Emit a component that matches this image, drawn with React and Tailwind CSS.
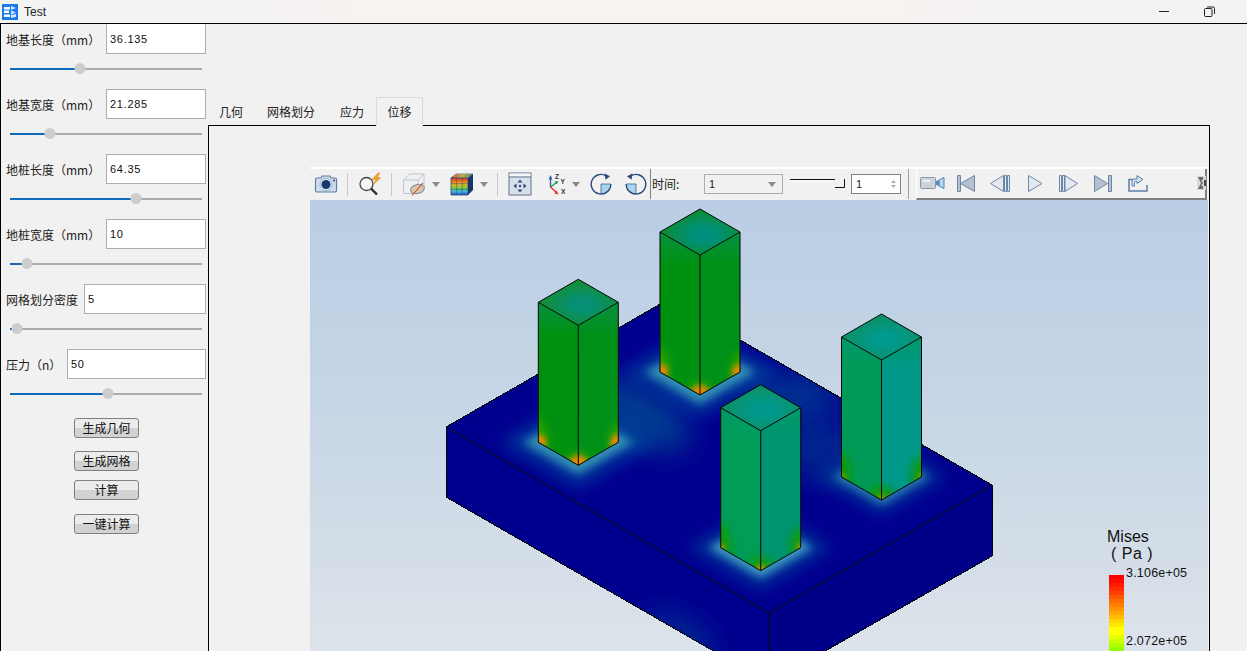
import React from "react";

const fields = [
  { label: "地基长度（mm）", value: "36.135", labelW: "w-[100px]", thumb: 70, first: true },
  { label: "地基宽度（mm）", value: "21.285", labelW: "w-[100px]", thumb: 40 },
  { label: "地桩长度（mm）", value: "64.35", labelW: "w-[100px]", thumb: 126 },
  { label: "地桩宽度（mm）", value: "10", labelW: "w-[100px]", thumb: 17 },
  { label: "网格划分密度", value: "5", labelW: "w-[78px]", thumb: 7 },
  { label: "压力（n）", value: "50", labelW: "w-[61px]", thumb: 98 },
];

function Field({ label, value, labelW, thumb, first }) {
  return (
    <div className="h-[65px] shrink-0">
      <div className="flex h-[30px] items-center pl-[5px] pr-[2px]">
        <div className={`${labelW} shrink-0 text-[12px] leading-none text-[#222] pt-[2px] whitespace-nowrap`}>{label}</div>
        <div className={`flex h-[30px] flex-1 items-center border border-[#adadad] bg-white pl-[3px] font-['Liberation_Sans',sans-serif] text-[11px] tracking-[0.7px] text-[#111] ${first ? "border-t-white" : ""}`}>
          {value}
        </div>
      </div>
      <div className="relative ml-[9px] mt-[14px] h-[2px] w-[192px] bg-[#acacac]">
        <div className="h-[2px] bg-[#0f6cbd]" style={{ width: thumb }} />
        <div className="absolute top-[-5px] h-[11px] w-[11px] -translate-x-1/2 rounded-full bg-[#cdcdcd]" style={{ left: thumb }} />
      </div>
    </div>
  );
}

function Btn({ children, className = "" }) {
  return (
    <div className={`ml-[73px] flex h-[20px] w-[65px] items-center justify-center rounded-[3px] border border-[#808080] bg-[linear-gradient(#ececec_50%,#d2d2d2_50%)] text-[12px] text-[#111] ${className}`}>
      {children}
    </div>
  );
}

function Sep({ className = "" }) {
  return <div className={`h-[23px] w-px shrink-0 bg-[#c8c8c8] ${className}`} />;
}

function Caret({ className = "" }) {
  return (
    <svg width="8" height="5" viewBox="0 0 8 5" className={`shrink-0 ${className}`}>
      <path d="M0 0h8L4 5z" fill="#8a8a8a" />
    </svg>
  );
}

function Ico({ w = 24, h = 24, className = "", children }) {
  return (
    <svg width={w} height={h} viewBox={`0 0 ${w} ${h}`} className={`shrink-0 ${className}`}>
      {children}
    </svg>
  );
}

const CameraIcon = () => (
  <Ico className="ml-[4px]">
    <path d="M1.500 7.500q0-1.500 1.500-1.500H7l1-2h8l1 2h4q1.500 0 1.500 1.500v11q0 1.500-1.500 1.500H3q-1.500 0-1.500-1.500z" fill="#cfdcec" stroke="#5f7fa6" strokeWidth="1.200" />
    <circle cx="12" cy="12.500" r="6" fill="#eaf0f7" stroke="#8aa3c2" strokeWidth="0.8" />
    <circle cx="12" cy="12.500" r="4.500" fill="#17386f" />
    <circle cx="20" cy="8.500" r="0.9" fill="#17386f" />
  </Ico>
);

const SearchBoltIcon = () => (
  <Ico className="ml-[10px]">
    <circle cx="8.500" cy="12" r="6.500" fill="#f4f6f8" stroke="#444" strokeWidth="1.300" />
    <path d="M13 16.500l6 6" stroke="#2c2c2c" strokeWidth="2.400" />
    <path d="M20 1l-6 6.500h4l-3 5.500 8-7.500h-4l3-4.500z" fill="#f0a030" stroke="#d98a20" strokeWidth="0.5" />
  </Ico>
);

const HiddenCubeIcon = () => (
  <Ico className="ml-[10px]">
    <path d="M1.500 8l6-6h14.500v13l-6 6.500H1.500z" fill="#eef0f3" stroke="#c0c6d0" />
    <path d="M1.500 8H16v13.500M16 8l6-6" fill="none" stroke="#c0c6d0" />
    <ellipse cx="15.500" cy="17" rx="7" ry="4.500" transform="rotate(-15 15.500 17)" fill="#d8c9a8" stroke="#7f8694" />
    <path d="M10 23.500L21 11" stroke="#d0452a" strokeWidth="1.100" />
  </Ico>
);

const ColorCubeIcon = () => (
  <Ico className="ml-[10px]">
    <defs>
      <linearGradient id="cc-front" x1="0" y1="0" x2="0" y2="1">
        <stop offset="0" stopColor="#e03020" />
        <stop offset="0.35" stopColor="#f0b020" />
        <stop offset="0.6" stopColor="#70d040" />
        <stop offset="0.8" stopColor="#40b0e0" />
        <stop offset="1" stopColor="#2050c0" />
      </linearGradient>
      <linearGradient id="cc-top" x1="0" y1="0" x2="1" y2="0">
        <stop offset="0" stopColor="#e05030" />
        <stop offset="0.5" stopColor="#f0d040" />
        <stop offset="1" stopColor="#50b050" />
      </linearGradient>
    </defs>
    <path d="M1 6l5-4h17l-5 4z" fill="url(#cc-top)" stroke="#2f4a78" strokeWidth="0.6" />
    <path d="M1 6h17v17H1z" fill="url(#cc-front)" stroke="#2f4a78" strokeWidth="0.8" />
    <path d="M18 6l5-4v16l-5 5z" fill="#17356c" />
    <path d="M6.700 6v17M12.300 6v17M1 11.700h17M1 17.300h17M6 4h17" stroke="#2f4a78" strokeWidth="0.5" fill="none" />
  </Ico>
);

const FitIcon = () => (
  <Ico className="ml-[10px]">
    <rect x="1" y="1" width="22" height="22" fill="#d9dfe8" stroke="#5e7190" />
    <rect x="1.500" y="1.500" width="21" height="3" fill="#f4f6f9" />
    <path d="M1 5h22" stroke="#5e7190" />
    <path d="M12 7.500l-2.500 3h5zM12 20.500l-2.500-3h5zM5.500 14l3-2.500v5zM18.500 14l-3-2.500v5z" fill="#2e4a78" />
    <circle cx="12" cy="14" r="1.200" fill="#2e4a78" />
  </Ico>
);

const AxesIcon = () => (
  <Ico w={24} h={24} className="ml-[12px]">
    <path d="M6.500 15V6" stroke="#2c62b0" strokeWidth="1.400" />
    <path d="M6.500 3L4.500 7.500h4z" fill="#2c62b0" />
    <path d="M6.500 15l6-4.500" stroke="#23a050" strokeWidth="1.400" />
    <path d="M14.500 9l-4 .5 2 3z" fill="#23a050" />
    <path d="M6.500 15l6 5.500" stroke="#e03030" strokeWidth="1.400" />
    <path d="M14.500 22.500l-4-1 2-3z" fill="#e03030" />
    <text x="11" y="6.500" fontSize="6.500" fontWeight="700" fill="#333" fontFamily="Liberation Sans">Z</text>
    <text x="16.500" y="11.500" fontSize="6.500" fontWeight="700" fill="#333" fontFamily="Liberation Sans">Y</text>
    <text x="17" y="22" fontSize="6.500" fontWeight="700" fill="#333" fontFamily="Liberation Sans">X</text>
  </Ico>
);

const RotateIcon = ({ flip, className = "" }) => (
  <Ico className={className}>
    <g transform={flip ? "matrix(-1 0 0 1 24 0)" : undefined}>
      <path d="M12 12h9.500A9.500 9.500 0 0 1 12 21.500z" fill="#a9d4f0" />
      <path d="M17 3.800A9.800 9.800 0 1 0 21.800 12" fill="none" stroke="#274a7c" strokeWidth="1.400" />
      <path d="M15.500 1.500l5.500 2.800-4.500 3.500z" fill="#274a7c" />
      <path d="M12 12v9.800M12 12h9.800" stroke="#274a7c" strokeWidth="0.7" />
    </g>
  </Ico>
);

const stroke = "#6d87ab";
const fill = "#e4e9f0";

const CamcorderIcon = () => (
  <Ico w={25} h={16} className="ml-[3px]">
    <rect x="0.500" y="2.500" width="15" height="11" rx="1" fill="#ced2d9" stroke="#8b95a5" />
    <rect x="3" y="5" width="7" height="2" fill="#eef0f3" />
    <path d="M16 6l3-1v6l-3-1z" fill="#5b88b8" />
    <path d="M19 5l5-2.500v11L19 11z" fill="#bcd3e8" stroke="#3e86c0" />
  </Ico>
);

const PlayerIcon = ({ w, className = "", d, solid }) => (
  <Ico w={w} h={17} className={className}>
    <path d={d} fill={solid ? "#b5bfcd" : fill} stroke={stroke} strokeWidth="1" />
  </Ico>
);

const ExportIcon = () => (
  <Ico w={20} h={18} className="ml-[16px]">
    <path d="M5 5.500H1v11.500h18v-6" fill="none" stroke="#5d7da6" strokeWidth="1.500" />
    <path d="M4 12V7q0-2 2-2h3V1.500L15 5.500l-6 4V7.500H7.500Q6.500 7.500 6.500 8.500V12z" fill="#d6e2ef" stroke="#5d7da6" />
  </Ico>
);

const GripIcon = () => (
  <Ico w={9} h={16} className="ml-[49px]">
    <rect x="0" y="1" width="9" height="14" fill="#d8d8d8" />
    <path d="M1 2h5v3H4L6 8l-2 3h2v3H1l3-6z" fill="#6a6a6a" />
    <path d="M7 5h2v6H7z" fill="#4a4a4a" />
  </Ico>
);

function Toolbar() {
  return (
    <div className="flex h-[33px] w-[898px] shrink-0 border-t-2 border-t-white bg-[#f1f1f1] text-[12px] text-[#222]">
      <div className="flex h-[30px] w-[599px] shrink-0 items-center border-r border-r-[#a0a0a0]">
        <CameraIcon />
        <Sep className="ml-[9px]" />
        <SearchBoltIcon />
        <Sep className="ml-[9px]" />
        <HiddenCubeIcon />
        <Caret className="ml-[6px]" />
        <ColorCubeIcon />
        <Caret className="ml-[6px]" />
        <Sep className="ml-[9px]" />
        <FitIcon />
        <AxesIcon />
        <Caret className="ml-[4px]" />
        <RotateIcon className="ml-[9px]" />
        <RotateIcon flip className="ml-[11px]" />
        <div className="ml-[2px] h-[30px] w-px shrink-0 bg-[#808080]" />
        <div className="w-[53px] shrink-0 pl-[1px] leading-none">时间:</div>
        <div className="flex h-[20px] w-[79px] shrink-0 items-center justify-between border border-[#adadad] pl-[4px] pr-[6px] font-['Liberation_Sans',sans-serif] text-[11px]">
          1
          <Caret />
        </div>
        <svg width="56" height="14" viewBox="0 0 56 14" className="ml-[7px] shrink-0">
          <path d="M0 2.500h45" stroke="#111" />
          <path d="M0 4h44" stroke="#fff" />
          <path d="M45 10.500h9.500V2" fill="none" stroke="#111" />
        </svg>
        <div className="ml-[5px] flex h-[20px] w-[50px] shrink-0 items-center justify-between border border-[#808080] bg-white pl-[4px] pr-[4px] font-['Liberation_Sans',sans-serif] text-[11px]">
          1
          <svg width="5" height="10" viewBox="0 0 5 10">
            <path d="M0 4l2.500-3L5 4zM0 6l2.500 3L5 6z" fill="#b0b0b0" />
          </svg>
        </div>
      </div>
      <div className="ml-[7px] flex h-[31px] w-[291px] shrink-0 items-center border-b-[2px] border-r-[2px] border-b-[#808080] border-r-[#808080] border-l border-l-white pb-[1px]">
        <CamcorderIcon />
        <PlayerIcon w={18} className="ml-[12px]" d="M.5.5h3v16h-3zM17.500.5v16l-14-8z" solid />
        <PlayerIcon w={20} className="ml-[15px]" d="M.5 8.500l13-8v16zM14.500.5h2v16h-2zM17.500.5h2v16h-2z" />
        <PlayerIcon w={15} className="ml-[18px]" d="M.5.5l13.500 8-13.500 8z" />
        <PlayerIcon w={19} className="ml-[16px]" d="M.5.5h2v16h-2zM3.500.5h2v16h-2zM6 .5l12.500 8-12.500 8z" />
        <PlayerIcon w={18} className="ml-[16px]" d="M.5.5l13 8-13 8zM14.500.5h3v16h-3z" solid />
        <ExportIcon />
        <GripIcon />
      </div>
    </div>
  );
}

const pillars = [
  { id: "p2", cx: 700, y: 209, left: "#009010", right: "#009018", top: "#009080", topEdge: "#0c8e2c", edge: "#069040", hot: "#e08a00", hotR: 8, warm: "#28a000" },
  { id: "p1", cx: 578.3, y: 279.3, left: "#009010", right: "#009018", top: "#069078", topEdge: "#148e2c", edge: "#069040", hot: "#e08a00", hotR: 8, warm: "#28a000" },
  { id: "p4", cx: 881.5, y: 314, left: "#009a58", right: "#009888", top: "#009a90", topEdge: "#0c9060", edge: "#00986a", hot: "#70a000", hotR: 4, warm: "#109808" },
  { id: "p3", cx: 760.7, y: 384.7, left: "#009c58", right: "#009470", top: "#00988e", topEdge: "#0e9060", edge: "#009a68", hot: "#b09800", hotR: 4, warm: "#109c08" },
];

function PillarDefs({ p }) {
  const { cx, y } = p;
  const leftPts = `${cx - 40},${y + 23} ${cx},${y + 46} ${cx},${y + 186} ${cx - 40},${y + 163}`;
  const rightPts = `${cx},${y + 46} ${cx + 40},${y + 23} ${cx + 40},${y + 163} ${cx},${y + 186}`;
  return (
    <>
      <linearGradient id={`${p.id}-lg`} x1="0" y1="0" x2="0" y2="1">
        <stop offset="0" stopColor={p.edge} />
        <stop offset="0.2" stopColor={p.left} />
      </linearGradient>
      <linearGradient id={`${p.id}-rg`} x1="0" y1="0" x2="0" y2="1">
        <stop offset="0" stopColor={p.edge} />
        <stop offset="0.2" stopColor={p.right} />
      </linearGradient>
      <radialGradient id={`${p.id}-tg`} cx="0.55" cy="0.55" r="0.55">
        <stop offset="0.2" stopColor={p.top} />
        <stop offset="1" stopColor={p.topEdge} />
      </radialGradient>
      <clipPath id={`${p.id}-lc`}>
        <polygon points={leftPts} />
      </clipPath>
      <clipPath id={`${p.id}-rc`}>
        <polygon points={rightPts} />
      </clipPath>
    </>
  );
}

function Pillar({ p }) {
  const { cx, y } = p;
  const blY = y + 163;
  const bfY = y + 186;
  const leftPts = `${cx - 40},${y + 23} ${cx},${y + 46} ${cx},${bfY} ${cx - 40},${blY}`;
  const rightPts = `${cx},${y + 46} ${cx + 40},${y + 23} ${cx + 40},${blY} ${cx},${bfY}`;
  const topPts = `${cx},${y} ${cx + 40},${y + 23} ${cx},${y + 46} ${cx - 40},${y + 23}`;
  return (
    <g>
      <polygon points={leftPts} fill={`url(#${p.id}-lg)`} />
      <polygon points={rightPts} fill={`url(#${p.id}-rg)`} />
      <polygon points={topPts} fill={`url(#${p.id}-tg)`} />
      <g clipPath={`url(#${p.id}-lc)`}>
        <g filter="url(#blur4)">
          <ellipse cx={cx - 40} cy={blY} rx="10" ry="24" fill={p.warm} />
          <ellipse cx={cx} cy={bfY} rx="14" ry="14" fill={p.warm} />
        </g>
        <g filter="url(#blur2)">
          <circle cx={cx - 40} cy={blY} r={p.hotR} fill={p.hot} />
          <circle cx={cx} cy={bfY} r={p.hotR + 2} fill={p.hot} />
        </g>
      </g>
      <g clipPath={`url(#${p.id}-rc)`}>
        <g filter="url(#blur4)">
          <ellipse cx={cx + 40} cy={blY} rx="10" ry="20" fill={p.warm} />
          <ellipse cx={cx} cy={bfY} rx="14" ry="14" fill={p.warm} />
        </g>
        <g filter="url(#blur2)">
          <circle cx={cx + 40} cy={blY} r={p.hotR} fill={p.hot} />
          <circle cx={cx} cy={bfY} r={p.hotR + 2} fill={p.hot} />
        </g>
      </g>
      <path
        d={`M${cx} ${y}L${cx + 40} ${y + 23}L${cx + 40} ${blY}L${cx} ${bfY}L${cx - 40} ${blY}L${cx - 40} ${y + 23}ZM${cx - 40} ${y + 23}L${cx} ${y + 46}L${cx + 40} ${y + 23}M${cx} ${y + 46}L${cx} ${bfY}`}
        fill="none"
        stroke="#050505"
        strokeWidth="1"
      />
    </g>
  );
}

// soft halo on the plate round a pillar's foot
function Glow({ cx, y, color = "#3fa8bc", pad = 9, wide = 22, opacity = 0.8 }) {
  const midY = y + 163;
  const diamond = (n) => `${cx},${midY - 23 - n} ${cx + 40 + n * 1.7},${midY} ${cx},${midY + 23 + n} ${cx - 40 - n * 1.7},${midY}`;
  return (
    <g>
      <polygon points={diamond(wide)} fill="#0060a4" opacity="0.55" filter="url(#blur8)" />
      <polygon points={diamond(pad)} fill={color} opacity={opacity} filter="url(#blur4)" />
    </g>
  );
}

function Scene() {
  return (
    <svg viewBox="310 200 898 451" width="898" height="451" className="block">
      <defs>
        <linearGradient id="sky" x1="0" y1="0" x2="0" y2="1">
          <stop offset="0" stopColor="#b9cde4" />
          <stop offset="0.55" stopColor="#cad8e6" />
          <stop offset="1" stopColor="#dde3ea" />
        </linearGradient>
        <filter id="blur2" x="-50%" y="-50%" width="200%" height="200%"><feGaussianBlur stdDeviation="2.500" /></filter>
        <filter id="blur4" x="-50%" y="-50%" width="200%" height="200%"><feGaussianBlur stdDeviation="4" /></filter>
        <filter id="blur8" x="-50%" y="-50%" width="200%" height="200%"><feGaussianBlur stdDeviation="8" /></filter>
        <filter id="blur14" x="-50%" y="-50%" width="200%" height="200%"><feGaussianBlur stdDeviation="14" /></filter>
        <clipPath id="plate-top"><polygon points="446,427 669,299 992,485 769,613" /></clipPath>
        <clipPath id="plate-left"><polygon points="446,427 769,613 769,683 446,497" /></clipPath>
        {pillars.map((p) => <PillarDefs key={p.id} p={p} />)}
      </defs>
      <rect x="310" y="200" width="898" height="451" fill="url(#sky)" />

      <polygon points="446,427 669,299 992,485 769,613" fill="#00008f" />
      <polygon points="446,427 769,613 769,683 446,497" fill="#00008f" />
      <polygon points="769,613 992,485 992,556 769,683" fill="#000088" />

      <g clipPath="url(#plate-top)">
        <g filter="url(#blur14)">
          <ellipse cx="640" cy="415" rx="55" ry="26" fill="#003c92" transform="rotate(30 640 415)" />
          <ellipse cx="820" cy="450" rx="50" ry="30" fill="#00208e" />
          <ellipse cx="790" cy="395" rx="50" ry="22" fill="#003090" />
        </g>
        <Glow cx={700} y={209} />
        <Glow cx={578.3} y={279.3} />
        <Glow cx={881.5} y={314} color="#3c98b8" pad={5} wide={14} opacity={0.7} />
        <Glow cx={760.7} y={384.7} color="#50b4c8" pad={7} wide={18} />
      </g>
      <g clipPath="url(#plate-left)" filter="url(#blur14)">
        <ellipse cx="680" cy="635" rx="40" ry="16" fill="#002c90" transform="rotate(30 680 635)" />
      </g>

      <g shapeRendering="crispEdges" fill="none" stroke="#050505" strokeWidth="1">
        <path d="M446 427L669 299L992 485L992 556L769 683L446 497Z" />
      </g>
      <path d="M446 427L769 613L992 485M769 613V683" fill="none" stroke="#050505" strokeWidth="1" />

      {pillars.map((p) => <Pillar key={p.id} p={p} />)}
    </svg>
  );
}

const bandColors = [
  "#ff0000", "#ff0c00", "#ff1c00", "#ff2c00", "#ff4000", "#ff5400", "#ff6c00", "#ff8000",
  "#ff9400", "#ffa800", "#ffbc00", "#ffd400", "#ffe800", "#ffff00", "#ffff00", "#e8ff00",
  "#ccff00", "#b0ff00", "#94ff00",
];

function Legend() {
  return (
    <div className="absolute left-[797px] top-[328px] w-[100px] text-[#111]">
      <div className="font-['Liberation_Sans',sans-serif] text-[16px] leading-[17px]">Mises</div>
      <div className="ml-[4px] whitespace-pre font-['Liberation_Sans',sans-serif] text-[16px] leading-[17px] tracking-[0.5px]">( Pa )</div>
      <div className="mt-[12px] flex items-start">
        <div className="ml-[2px] mt-[1px] w-[15px]">
          {bandColors.map((c, i) => (
            <div key={i} className="h-[4px]" style={{ backgroundColor: c }} />
          ))}
        </div>
      </div>
      <div className="absolute left-[19px] top-[39px] whitespace-nowrap font-['Liberation_Sans',sans-serif] text-[12.500px] leading-none tracking-[0.2px]">3.106e+05</div>
      <div className="absolute left-[19px] top-[107px] whitespace-nowrap font-['Liberation_Sans',sans-serif] text-[12.500px] leading-none tracking-[0.2px]">2.072e+05</div>
    </div>
  );
}

export default function App() {
  return (
    <div className="flex h-[651px] w-[1247px] flex-col overflow-hidden bg-[#f1f1f1] font-['Noto_Sans_CJK_SC',sans-serif]">
      {/* title bar */}
      <div className="flex h-[24px] shrink-0 items-center border-b border-b-black bg-[linear-gradient(90deg,#f3f3f3,#f8f3f0_50%,#f3f3f3)]">
        <svg width="16" height="16" viewBox="0 0 16 16" className="ml-[2px] shrink-0">
          <rect width="16" height="16" fill="#1b7be8" />
          <path d="M2 3h6v2.500H2zM2 6.500h5V9H2zM2 10.500h6V13H2z" fill="#fff" />
          <path d="M9 2l5 2-5 2zM9 6.500l5 2-5 2zM9 11l5-1v3l-5 1z" fill="#cfe4fb" />
        </svg>
        <div className="ml-[6px] font-['Liberation_Sans',sans-serif] text-[12px] text-[#222]">Test</div>
        <div className="ml-auto mr-[35px] h-px w-[10px] bg-[#222]" />
        <svg width="11" height="11" viewBox="0 0 11 11" className="mr-[32px] shrink-0">
          <rect x="0.500" y="2.500" width="7.500" height="8" rx="1" fill="none" stroke="#222" />
          <path d="M3 1h6q1.500 0 1.500 1.500V8" fill="none" stroke="#222" />
        </svg>
      </div>

      <div className="flex min-h-0 flex-1">
        {/* parameter panel */}
        <div className="w-[208px] shrink-0 border-l border-l-black">
          {fields.map((f) => <Field key={f.label} {...f} />)}
          <Btn className="mt-[4px]">生成几何</Btn>
          <Btn className="mt-[13px]">生成网格</Btn>
          <Btn className="mt-[9px]">计算</Btn>
          <Btn className="mt-[14px]">一键计算</Btn>
        </div>

        {/* tabs and viewer */}
        <div className="flex w-[1002px] shrink-0 flex-col pt-[73px]">
          <div className="relative z-10 -mb-px flex h-[29px] shrink-0 items-center text-[12px] text-[#222]">
            <div className="ml-[11px]">几何</div>
            <div className="ml-[24px]">网格划分</div>
            <div className="ml-[25px]">应力</div>
            <div className="ml-[12px] flex h-[29px] w-[47px] items-center justify-center border border-b-0 border-[#d9d9d9] bg-[#f1f1f1]">位移</div>
          </div>
          <div className="min-h-0 flex-1 border border-b-0 border-black bg-[#f1f1f1] pl-[101px] pt-[41px]">
            <Toolbar />
            <div className="relative h-[451px] w-[898px] overflow-hidden">
              <Scene />
              <Legend />
            </div>
          </div>
        </div>
      </div>
    </div>
  );
}
